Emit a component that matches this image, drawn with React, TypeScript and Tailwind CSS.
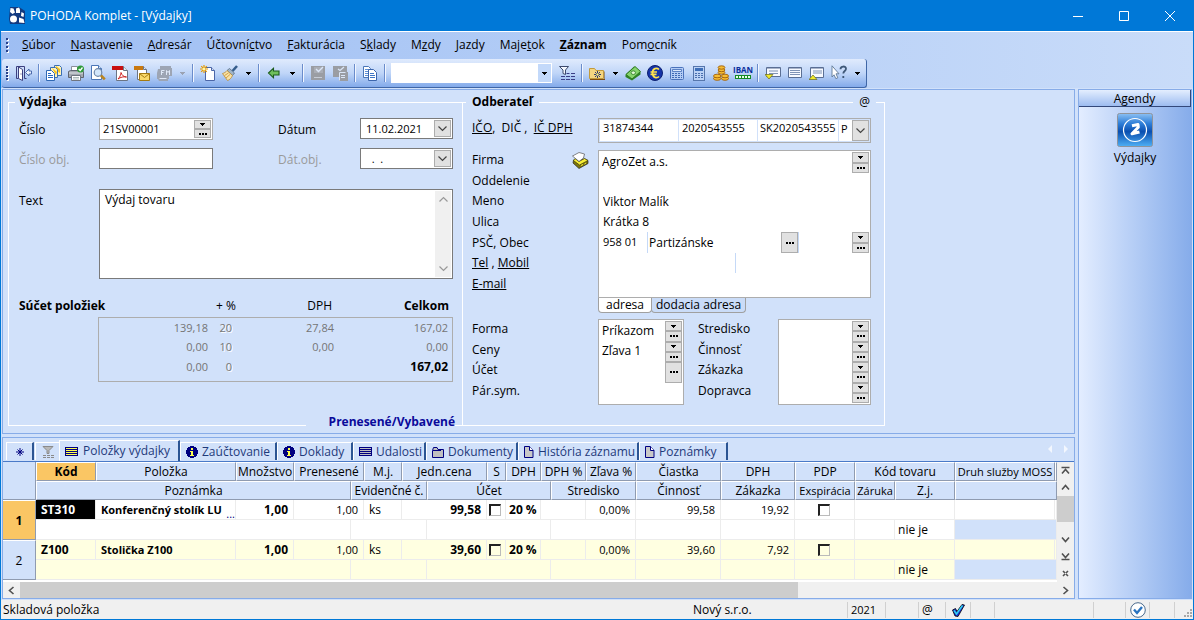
import React from "react";

type Kids = { children?: React.ReactNode };

/* ---------- small glyphs ---------- */

function Down({ className = "text-black" }: { className?: string }) {
  return (
    <svg width="5" height="3" viewBox="0 0 5 3" className={className} shapeRendering="crispEdges" aria-hidden="true">
      <path d="M0 0h5v1H4v1H3v1H2V2H1V1H0z" fill="currentColor" />
    </svg>
  );
}

function Dots() {
  return (
    <svg width="8" height="2" viewBox="0 0 8 2" shapeRendering="crispEdges" aria-hidden="true">
      <path d="M0 0h2v2H0zM3 0h2v2H3zM6 0h2v2H6z" fill="#000" />
    </svg>
  );
}

function Chevron({ d, className = "text-[#444]" }: { d: string; className?: string }) {
  return (
    <svg width="9" height="9" viewBox="0 0 9 9" className={className} fill="none" stroke="currentColor" strokeWidth="1.200" aria-hidden="true">
      <path d={d} />
    </svg>
  );
}

const CH_DOWN = "M0.5 2.5l4 4 4-4";

/* ---------- toolbar icons, 16 x 16 ---------- */

function Svg({ children }: Kids) {
  return (
    <svg width="16" height="16" viewBox="0 0 16 16" fill="none" aria-hidden="true">
      {children}
    </svg>
  );
}

const icons = {
  exit: (
    <Svg>
      <path d="M.5 13.500V1.500h8v12" stroke="#3d3f7e" />
      <path d="M.5 13.500h2M8.500 13.500h2" stroke="#3d3f7e" />
      <path d="M2.500 2l4 2.500v11l-4-2z" fill="#fff" stroke="#3d3f7e" />
      <path d="M4.500 9h1" stroke="#3d3f7e" />
      <path d="M9.500 7.500L13 4v2h2.500v3H13v2z" fill="#eaf1fd" stroke="#3f5fa5" strokeWidth=".9" />
    </Svg>
  ),
  records: (
    <Svg>
      <path d="M8.500.5h5l2 2v8h-7z" fill="#fff3b8" stroke="#3a6fb5" />
      <path d="M10 1l4 3v4l-4-3z" fill="#f7c21a" />
      <path d="M4.500 2.500h5l2 2v8h-7z" fill="#fff3b8" stroke="#3a6fb5" />
      <path d="M6 3l5 4-1 3z" fill="#f7c21a" />
      <path d="M.5 5.500h5l3 3v7h-8z" fill="#fff" stroke="#2f68b4" />
      <path d="M2 8.500h3M2 10.500h5M2 12.500h5" stroke="#2468c4" />
    </Svg>
  ),
  printer: (
    <Svg>
      <path d="M3.500 6V1.500h6V6" fill="#fff" stroke="#8a8f98" />
      <path d="M.5 6.500l2-1h11l2 1v6H.5z" fill="#a4a9b0" stroke="#5e6470" />
      <path d="M1 8h14" stroke="#dfe3e8" />
      <path d="M3.500 10.500h9v5h-9z" fill="#fff" stroke="#6f7580" />
      <path d="M5 12.500h6M5 14h6" stroke="#99aaaa" strokeWidth=".8" />
      <circle cx="12.500" cy="4" r="3.500" fill="#2f9a3a" />
      <path d="M10.700 4l1.500 1.500 2.300-3" stroke="#fff" strokeWidth="1.300" />
    </Svg>
  ),
  preview: (
    <Svg>
      <path d="M1.500.5h7l3 3v11h-10z" fill="#fff" stroke="#4b76b7" />
      <path d="M8.500.5v3h3" stroke="#4b76b7" fill="#d7e5f8" />
      <circle cx="8" cy="7.500" r="3.800" fill="#d3e6fa" stroke="#7088a8" strokeWidth="1.200" />
      <path d="M11 10.500l3.800 3.800" stroke="#b98420" strokeWidth="2.600" />
    </Svg>
  ),
  pdf: (
    <Svg>
      <path d="M4.500 1.500h7l4 4v10h-11z" fill="#fff" stroke="#6b7484" />
      <path d="M11.500 1.500v4h4" stroke="#6b7484" fill="#e5e9ef" />
      <path d="M0 1h11v4H0z" fill="#c80f0f" />
      <path d="M6 14c2-2 3-4.500 3-6.500 1 3 3 4.500 5.500 4.500-3-.7-6 .3-8.500 2z" stroke="#c80f0f" strokeWidth=".9" />
    </Svg>
  ),
  mail: (
    <Svg>
      <path d="M3.500 1.500h6l3 3v10h-9z" fill="#fff" stroke="#6b7484" />
      <path d="M9.500 1.500v3h3" stroke="#6b7484" fill="#e5e9ef" />
      <path d="M0 1h9v4H0z" fill="#c9780e" />
      <path d="M5.500 8.500h10v7h-10z" fill="#f9d96a" stroke="#a57a10" />
      <path d="M5.500 8.500l5 4 5-4" stroke="#a57a10" />
    </Svg>
  ),
  fm: (
    <Svg>
      <path d="M4 1h11v2h1v8h-3v3h-1v2H3l-1-2H1V8l1-4h2z" fill="#9da5b4" />
      <path d="M5.500 10V5.500h3M5.500 7.500h2M10.500 10V5.500l1.500 2 1.500-2V10M3.500 13.500h7" stroke="#dfe8f7" />
    </Svg>
  ),
  fresh: (
    <Svg>
      <path d="M5.500 2.500h6l3 3v10h-9z" fill="#fff" stroke="#4b66a8" />
      <path d="M11.500 2.500v3h3" fill="#cfdcf2" stroke="#4b66a8" />
      <path d="M4 0v8M0 4h8M1.200 1.200l5.600 5.600M6.800 1.200L1.200 6.800" stroke="#e79a00" strokeWidth="1.200" />
      <circle cx="4" cy="4" r="1.600" fill="#fff6a8" />
    </Svg>
  ),
  brush: (
    <Svg>
      <path d="M15 1l-4.500 5" stroke="#355d8c" strokeWidth="2.600" />
      <path d="M7.500 3.500l5 4.500-2 2.500L5 5.500z" fill="#9fb4c9" stroke="#4d6176" strokeWidth=".7" />
      <path d="M5 5.500l5.500 5c-1 2.500-3 4.500-5 5L.5 8.500C2.500 8 4 7 5 5.500z" fill="#f8e2a8" stroke="#b98a34" strokeWidth=".8" />
      <path d="M2.500 10.500l4-2.500M4 13l4-3.500" stroke="#d29a38" strokeWidth=".9" />
    </Svg>
  ),
  back: (
    <Svg>
      <path d="M2.500 8l5-4.800V6h5.500v4H7.500v2.800z" fill="#6fbf5c" stroke="#1c5c1c" strokeWidth="1.100" />
    </Svg>
  ),
  save: (
    <Svg>
      <path d="M1 1h14v14H1z" fill="#9a9da3" />
      <path d="M4 2h9v6H4z" fill="#a9adb5" />
      <path d="M6 4l2.500 2.500L13 2" stroke="#dbe6f7" strokeWidth="1.400" />
      <path d="M4 12.500h8" stroke="#c6ccd6" />
    </Svg>
  ),
  saveAll: (
    <Svg>
      <path d="M1 1h14v6h1v9H7v-4H1z" fill="#9a9da3" />
      <path d="M6 4l2 1.500L12 2" stroke="#dbe6f7" strokeWidth="1.300" />
      <path d="M7.500 15.500v-8h6M9 10.500h4M9 12.500h4" stroke="#dbe6f7" />
    </Svg>
  ),
  copy: (
    <Svg>
      <path d="M1.500 1.500h5l2 2v9h-7z" fill="#fff" stroke="#4b76b7" />
      <path d="M3 4.500h4M3 6.500h4M3 8.500h4M3 10.500h3" stroke="#5d8fd6" />
      <path d="M6.500 4.500h5l3 3v8h-8z" fill="#fff" stroke="#3c66ad" />
      <path d="M8 8.500h4M8 10.500h5M8 12.500h5" stroke="#3f76c6" />
    </Svg>
  ),
  filter: (
    <Svg>
      <path d="M.5 1.500h9L6.500 5v4.500L4 8.500V5z" fill="#f4f8ff" stroke="#3d4a6c" />
      <path d="M2 11.500h4M7 11.500h4M12 11.500h4M2 14.500h4M7 14.500h4M12 14.500h4M7.500 8.500h3M12 8.500h4" stroke="#3a3f86" />
    </Svg>
  ),
  folder: (
    <Svg>
      <path d="M.5 13.500v-10h5l1.500 2h7.500v8z" fill="#f5d680" stroke="#c29a3c" />
      <path d="M1 14.500h15V6.500" stroke="#7d4c10" />
      <path d="M8.500 6v7M5 9.500h7M6 7l5 5M11 7l-5 5" stroke="#1c2b6b" strokeWidth=".9" />
      <circle cx="8.500" cy="9.500" r="1.200" fill="#fff07a" />
    </Svg>
  ),
  money: (
    <Svg>
      <path d="M.5 9.500L9 1.500l6.500 5.500v2.500L7 15.500.5 12z" fill="#2f8424" />
      <path d="M1 9.500L10 1.500l5.500 5L7 14z" fill="#86d46c" stroke="#2f7a24" />
      <ellipse cx="8.300" cy="7.700" rx="2.200" ry="1.800" fill="#e0f8d3" stroke="#2f7a24" strokeWidth=".8" />
    </Svg>
  ),
  euro: (
    <Svg>
      <circle cx="8" cy="8" r="7.500" fill="#1533a8" stroke="#0b1f70" />
      <path d="M12 4.500C10 2.500 5.500 3 5.500 8s4.500 5.500 6.500 3.500M3.500 7h6.500M3.500 9.300h6" stroke="#ffe34d" strokeWidth="1.700" />
    </Svg>
  ),
  calc: (
    <Svg>
      <rect x="1.500" y="2.500" width="13" height="12" rx="1" fill="#b5cdf5" stroke="#4a72bb" />
      <path d="M3.500 4.500h9v2h-9z" fill="#dbe8fc" stroke="#3f6ab5" strokeWidth=".8" />
      <path d="M3 8.500h10M3 10.500h10M3 12.500h10" stroke="#3f6ab5" strokeDasharray="2 1" />
    </Svg>
  ),
  calc2: (
    <Svg>
      <rect x="2.500" y="1.500" width="11" height="14" fill="#bcd2f5" stroke="#5676ac" />
      <path d="M4 3h8v3H4z" fill="#3f6fb8" />
      <path d="M4 8.500h8M4 10.500h8M4 12.500h8" stroke="#4a6fae" strokeDasharray="2 1" />
    </Svg>
  ),
  coins: (
    <Svg>
      <g fill="#f6bd35" stroke="#a05f08" strokeWidth=".9">
        <ellipse cx="8.500" cy="7.500" rx="3.400" ry="1.700" />
        <ellipse cx="8.500" cy="5" rx="3.400" ry="1.700" />
        <ellipse cx="8.500" cy="2.500" rx="3.400" ry="1.700" />
        <ellipse cx="4.200" cy="13.500" rx="3.700" ry="1.800" />
        <ellipse cx="4.200" cy="11" rx="3.700" ry="1.800" />
        <ellipse cx="12" cy="13.500" rx="3.500" ry="1.800" />
        <ellipse cx="12" cy="11" rx="3.500" ry="1.800" />
      </g>
    </Svg>
  ),
  iban: (
    <svg width="16" height="16" viewBox="0 0 16 16" aria-hidden="true" className="overflow-visible">
      <text x="8" y="8" textAnchor="middle" fontSize="8" fontWeight="700" fill="#0a2f9c" fontFamily="Open Sans, sans-serif">
        IBAN
      </text>
      <path d="M0 10h16v4H0z" fill="#158a25" />
      <path d="M1 12h14" stroke="#eaffea" strokeWidth="2" strokeDasharray="2 1" />
    </svg>
  ),
  panelDown: (
    <Svg>
      <path d="M1.500 2.500h14v9h-14z" fill="#f6f9ff" stroke="#5a6f94" />
      <path d="M2 3h13" stroke="#5a6f94" />
      <path d="M4 6h9M4 8.500h9" stroke="#7f93b5" />
      <path d="M0 9.500h8l-4 4.500z" fill="#f1ea2a" stroke="#66681a" strokeWidth=".7" />
    </Svg>
  ),
  panel: (
    <Svg>
      <path d="M1.500 2.500h13v10h-13z" fill="#f6f9ff" stroke="#5a6f94" />
      <path d="M2 3h12" stroke="#5a6f94" />
      <path d="M3 5.500h10M3 7.500h10M3 9.500h10" stroke="#7f93b5" />
    </Svg>
  ),
  panelUp: (
    <Svg>
      <path d="M1.500 2.500h13v10h-13z" fill="#f6f9ff" stroke="#5a6f94" />
      <path d="M2 3h12" stroke="#5a6f94" />
      <path d="M4 6h9M4 8h9" stroke="#7f93b5" />
      <path d="M0 14.500h8L4 10z" fill="#f1ea2a" stroke="#66681a" strokeWidth=".7" />
    </Svg>
  ),
  help: (
    <Svg>
      <path d="M1 .8l7 8H5l1.800 4-2 .8L3 9.800 1 12z" fill="#fff" stroke="#5f7896" strokeWidth=".9" />
      <path d="M9.500 4.200c0-3.500 5.500-3.500 5.500-.4 0 2.200-2.700 2.200-2.700 4.700M12.300 11v2" stroke="#3f5878" strokeWidth="1.800" />
    </Svg>
  ),
};

function Tool({ icon, label }: { icon: keyof typeof icons; label: string }) {
  return (
    <button type="button" aria-label={label} className="grid w-[22px] shrink-0 place-items-center">
      {icons[icon]}
    </button>
  );
}

function ToolDrop({ label, dim = false }: { label: string; dim?: boolean }) {
  return (
    <button type="button" aria-label={label} className="grid w-3.5 shrink-0 place-items-center">
      <Down className={dim ? "text-[#9ba3b3]" : "text-black"} />
    </button>
  );
}

function ToolSep() {
  return (
    <div className="flex w-2 shrink-0 justify-center py-[5px]">
      <div className="w-0.5 border-r border-l border-r-[#f1f6ff] border-l-[#6a8ccb]" />
    </div>
  );
}

function Grip({ rows }: { rows: 4 | 5 }) {
  const ys = rows === 4 ? [0, 4, 8, 12] : [0, 3, 6, 9, 12];
  return (
    <svg width="3" height="15" viewBox="0 0 3 15" shapeRendering="crispEdges" aria-hidden="true">
      {ys.map((y) => (
        <g key={y}>
          <rect x="1" y={y + 1} width="2" height="2" fill="#fff" />
          <rect x="0" y={y} width="2" height="2" fill="#27418a" />
        </g>
      ))}
    </svg>
  );
}

/* ---------- form controls ---------- */

const face = "grid w-full flex-1 place-items-center border border-[#adadad] bg-[#e1e1e1]";

function Spin({ label }: { label: string }) {
  return (
    <div className="flex w-[17px] shrink-0 flex-col self-stretch">
      <button type="button" aria-label={label + " – zoznam"} className={face}>
        <Down />
      </button>
      <button type="button" aria-label={label + " – výber"} className={face}>
        <Dots />
      </button>
    </div>
  );
}

function More({ label }: { label: string }) {
  return (
    <div className="flex w-[17px] shrink-0 self-stretch">
      <button type="button" aria-label={label + " – výber"} className={face}>
        <Dots />
      </button>
    </div>
  );
}

function DateBox({ id, value, label }: { id: string; value: string; label: string }) {
  return (
    <div className="flex h-[21px] border border-[#7a7a7a] bg-white p-px">
      <input id={id} defaultValue={value} className="w-full min-w-0 flex-1 bg-transparent pl-1 text-[11px] outline-none" />
      <button type="button" aria-label={label + " – kalendár"} className="grid w-[17px] shrink-0 place-items-center border border-[#adadad] bg-[#e1e1e1]">
        <Chevron d={CH_DOWN} />
      </button>
    </div>
  );
}

const field = "min-w-0 bg-transparent outline-none";
const group = "border border-[#adadad] bg-white";
const taxField = "mr-px min-w-0 bg-white pb-1.5 text-[11px] outline-none";

function DeliveryForm() {
  return (
    <fieldset className="w-[455px] shrink-0 border border-white pr-[9px] pb-[43px] pl-2.5">
      <legend className="-ml-1 px-1 leading-[18px] font-bold">Výdajka</legend>
      <div className="grid grid-cols-[80px_114px_1fr_93px] pt-[7px]">
        <label htmlFor="cislo" className="leading-6">Číslo</label>
        <div className="flex h-[22px] border border-[#adadad] bg-white p-px">
          <input id="cislo" defaultValue="21SV00001" className={field + " flex-1 pl-0.5 text-[11px]"} />
          <Spin label="Číslo" />
        </div>
        <label htmlFor="datum" className="pl-[65px] leading-6">Dátum</label>
        <DateBox id="datum" value="11.02.2021" label="Dátum" />
      </div>
      <div className="grid grid-cols-[80px_114px_1fr_93px] pt-1.5">
        <label htmlFor="cisloobj" className="leading-6 text-[#9a9a9a]">Číslo obj.</label>
        <input id="cisloobj" defaultValue="" className="h-[21px] border border-[#7a7a7a] bg-white px-1 outline-none" />
        <label htmlFor="datobj" className="pl-[65px] leading-6 text-[#9a9a9a]">Dát.obj.</label>
        <DateBox id="datobj" value="  .  ." label="Dát.obj." />
      </div>
      <div className="grid grid-cols-[80px_1fr] pt-[17px]">
        <label htmlFor="text" className="leading-6">Text</label>
        <div className="flex h-[90px] border border-[#7a7a7a] bg-white p-px">
          <textarea id="text" defaultValue="Výdaj tovaru" className="min-w-0 flex-1 resize-none overflow-hidden px-1 leading-[18px] outline-none" />
          <div className="flex w-4 flex-col items-center justify-between bg-[#f0f0f0] py-1">
            <Chevron d="M0.5 6.500l4-4 4 4" className="text-[#999]" />
            <Chevron d={CH_DOWN} className="text-[#999]" />
          </div>
        </div>
      </div>
      <div className="pt-[17px]">
        <table className="w-full table-fixed border-separate border-spacing-0">
          <colgroup>
            <col className="w-[79px]" />
            <col className="w-[110px]" />
            <col className="w-7" />
            <col className="w-[102px]" />
            <col />
          </colgroup>
          <thead>
            <tr className="h-[21px] leading-5">
              <th colSpan={2} className="pb-px text-left font-bold">Súčet položiek</th>
              <th className="pb-px text-right font-normal whitespace-nowrap">+ %</th>
              <th className="pr-1.5 pb-px text-right font-normal">DPH</th>
              <th className="pr-1 pb-px text-right font-bold">Celkom</th>
            </tr>
          </thead>
          <tbody className="text-[11px] text-[#757575]">
            <tr className="h-5">
              <td />
              <td className="border-t border-l border-[#adadad] text-right">139,18</td>
              <td className="border-t border-[#adadad] pr-1 text-right [text-shadow:1px_1px_0_#fff]">20</td>
              <td className="border-t border-[#adadad] pr-1 text-right">27,84</td>
              <td className="border-t border-r border-[#adadad] pr-1 text-right">167,02</td>
            </tr>
            <tr className="h-5">
              <td />
              <td className="border-l border-[#adadad] text-right">0,00</td>
              <td className="pr-1 text-right [text-shadow:1px_1px_0_#fff]">10</td>
              <td className="pr-1 text-right">0,00</td>
              <td className="border-r border-[#adadad] pr-1 text-right">0,00</td>
            </tr>
            <tr className="h-[25px]">
              <td />
              <td className="border-b border-l border-[#adadad] pb-1 text-right">0,00</td>
              <td className="border-b border-[#adadad] pr-1 pb-1 text-right [text-shadow:1px_1px_0_#fff]">0</td>
              <td className="border-b border-[#adadad]" />
              <td className="border-r border-b border-[#adadad] pr-1 pb-1 text-right text-[12px] font-bold text-black">167,02</td>
            </tr>
          </tbody>
        </table>
      </div>
    </fieldset>
  );
}

function Printer() {
  return (
    <svg width="17" height="17" viewBox="0 0 17 17" aria-hidden="true">
      <path d="M1.500 8l-.5 3 6 5.500 9-5V8.500L13 7z" fill="#7d760c" stroke="#222" strokeWidth=".7" />
      <path d="M1.500 8.500L7.500 13l8.500-4.500-3.500-2L7 9.500 3 6.500z" fill="#f7ee35" stroke="#3c3a08" strokeWidth=".7" />
      <path d="M.5 4L7 .5l5.500 1.500-1 4L7 9.500z" fill="#fff" stroke="#555" strokeWidth=".7" />
      <path d="M9 13.500l2-1M12.500 12l1.500-1" stroke="#f7ee35" />
    </svg>
  );
}

function CustomerForm() {
  return (
    <fieldset className="relative -ml-px w-[423px] shrink-0 border border-white pr-[13px] pb-5 pl-[9px]">
      <legend className="-ml-1.5 px-1.5 leading-[18px] font-bold">Odberateľ</legend>
      <button type="button" className="absolute -top-[18px] right-2 bg-[#d1e1fa] px-1.5 leading-[18px]">@</button>
      <div className="grid grid-cols-[1fr_273px] pt-[7px]">
        <div className="leading-5">
          <a href="#ico" className="underline">IČO</a>,&nbsp; DIČ ,&nbsp; <a href="#icdph" className="underline">IČ DPH</a>
        </div>
        <div className="flex h-[25px] border border-[#adadad] bg-[#d1e1fa] p-px">
          <input aria-label="IČO" defaultValue="31874344" className={taxField + " w-[78px] pl-[3px]"} />
          <input aria-label="DIČ" defaultValue="2020543555" className={taxField + " w-[78px] pl-[3px]"} />
          <input aria-label="IČ DPH" defaultValue="SK2020543555" className={taxField + " w-[80px] pl-0.5"} />
          <div className="grid flex-1 grid-cols-[1fr_17px] bg-white">
            <select aria-label="Typ platcu" className="col-span-2 col-start-1 row-start-1 appearance-none bg-transparent pb-1 pl-0.5 text-[11px] outline-none">
              <option>P</option>
            </select>
            <span className="pointer-events-none col-start-2 row-start-1 grid place-items-center border border-[#adadad] bg-[#e1e1e1]">
              <Chevron d={CH_DOWN} />
            </span>
          </div>
        </div>
      </div>
      <div className="grid grid-cols-[1fr_273px] pt-[7px]">
        <div className="flex h-36 flex-col justify-between leading-5">
          <div className="flex justify-between">
            <label htmlFor="firma">Firma</label>
            <button type="button" aria-label="Adresár" className="mr-[9px]">
              <Printer />
            </button>
          </div>
          <label htmlFor="oddelenie">Oddelenie</label>
          <label htmlFor="meno">Meno</label>
          <label htmlFor="ulica">Ulica</label>
          <label htmlFor="psc">PSČ, Obec</label>
          <div>
            <a href="#tel" className="underline">Tel</a> , <a href="#mobil" className="underline">Mobil</a>
          </div>
          <a href="#email" className="underline">E-mail</a>
        </div>
        <div className={group + " flex h-[148px] flex-col justify-between p-px pb-1"}>
          <div className="flex h-[21px] shrink-0">
            <input id="firma" defaultValue="AgroZet a.s." className={field + " flex-1 pb-0.5 pl-0.5"} />
            <Spin label="Firma" />
          </div>
          <input id="oddelenie" className={field + " h-5 pl-[3px]"} />
          <input id="meno" defaultValue="Viktor Malík" className={field + " h-5 pb-0.5 pl-[3px]"} />
          <input id="ulica" defaultValue="Krátka 8" className={field + " h-5 pb-0.5 pl-[3px]"} />
          <div className="flex h-[21px] shrink-0">
            <input id="psc" defaultValue="958 01" className={field + " w-[47px] pb-0.5 pl-[3px] text-[11px]"} />
            <input aria-label="Obec" defaultValue="Partizánske" className={field + " w-[134px] border-l border-[#c5d9f7] pl-px"} />
            <More label="Obec" />
            <input aria-label="Štát" className={field + " flex-1 border-l border-[#c5d9f7]"} />
            <Spin label="Štát" />
          </div>
          <div className="flex h-5">
            <input aria-label="Tel" className={field + " w-[135px]"} />
            <input aria-label="Mobil" className={field + " flex-1 border-l border-[#c5d9f7]"} />
          </div>
          <input aria-label="E-mail" className={field + " h-5"} />
        </div>
      </div>
      <div className="flex h-[15px] pl-[126px] leading-[14px]">
        <button type="button" className="w-[54px] rounded-b border border-t-0 border-[#a0a0a0] bg-white">adresa</button>
        <button type="button" className="-ml-px rounded-b border border-t-0 border-[#a0a0a0] bg-[#cadcf8] px-1">dodacia adresa</button>
      </div>
      <div className="grid grid-cols-[126px_86px_1fr_93px] pt-1.5">
        <div className="flex h-[82px] flex-col justify-between leading-5">
          <label htmlFor="forma">Forma</label>
          <label htmlFor="ceny">Ceny</label>
          <label htmlFor="ucet">Účet</label>
          <label htmlFor="parsym">Pár.sym.</label>
        </div>
        <div className={group + " grid h-[86px] grid-cols-1 grid-rows-4 p-px"}>
          <div className="flex min-h-0">
            <input id="forma" defaultValue="Príkazom" className={field + " flex-1 pl-0.5"} />
            <Spin label="Forma" />
          </div>
          <div className="flex min-h-0">
            <input id="ceny" defaultValue="Zľava 1" className={field + " flex-1 pb-0.5 pl-0.5"} />
            <Spin label="Ceny" />
          </div>
          <div className="flex min-h-0">
            <input id="ucet" className={field + " flex-1"} />
            <More label="Účet" />
          </div>
          <input id="parsym" className={field + " w-full"} />
        </div>
        <div className="flex h-[82px] flex-col justify-between pl-3.5 leading-5">
          <label htmlFor="stredisko">Stredisko</label>
          <label htmlFor="cinnost">Činnosť</label>
          <label htmlFor="zakazka">Zákazka</label>
          <label htmlFor="dopravca">Dopravca</label>
        </div>
        <div className={group + " grid h-[86px] grid-cols-1 grid-rows-4 p-px"}>
          {[
            ["stredisko", "Stredisko"],
            ["cinnost", "Činnosť"],
            ["zakazka", "Zákazka"],
            ["dopravca", "Dopravca"],
          ].map(([id, label]) => (
            <div key={id} className="flex min-h-0">
              <input id={id} className={field + " flex-1"} />
              <Spin label={label} />
            </div>
          ))}
        </div>
      </div>
    </fieldset>
  );
}

/* ---------- item tabs ---------- */

const InfoIcon = (
  <svg width="12" height="12" viewBox="0 0 12 12" aria-hidden="true" shapeRendering="crispEdges">
    <path d="M4 0h4v1h2v1h1v2h1v4h-1v2h-1v1H8v1H4v-1H2v-1H1V8H0V4h1V2h1V1h2z" fill="#000080" />
    <path d="M5 2h2v2H5zM4 5h3v4h1v1H4V9h1V6H4z" fill="#ffff50" />
  </svg>
);
const listIcon = (fill: string) => (
  <svg width="13" height="9" viewBox="0 0 13 9" aria-hidden="true" shapeRendering="crispEdges">
    <path d="M0 0h13v9H0z" fill="#000080" />
    <path d="M1 1h11v1H1zM1 3h11v1H1zM1 5h11v1H1zM1 7h11v1H1z" fill={fill} />
  </svg>
);
const FolderIcon = (
  <svg width="12" height="12" viewBox="0 0 12 12" aria-hidden="true">
    <path d="M.5 11.500v-7l1-3h3.500l1 2h5.500v8z" fill="#c0c0c0" stroke="#000080" />
    <path d="M1 4.500h8" stroke="#000080" />
  </svg>
);
const PageIcon = (
  <svg width="10" height="12" viewBox="0 0 10 12" aria-hidden="true">
    <path d="M.5.5h5l3.500 4v7H.5z" fill="#c8c8c8" stroke="#000080" />
    <path d="M5.500.5v4h3.500" fill="#fff" stroke="#000080" />
  </svg>
);

const tabs: { label: string; icon: React.ReactNode; w: string }[] = [
  { label: "Zaúčtovanie", icon: InfoIcon, w: "w-[97px]" },
  { label: "Doklady", icon: InfoIcon, w: "w-[76px]" },
  { label: "Udalosti", icon: listIcon("#c0c0c0"), w: "w-[73px]" },
  { label: "Dokumenty", icon: FolderIcon, w: "w-[92px]" },
  { label: "História záznamu", icon: PageIcon, w: "w-[121px]" },
  { label: "Poznámky", icon: PageIcon, w: "w-[89px]" },
];

const tabEdge = "border-t border-r-2 border-l border-t-white border-r-[#2c5593] border-l-white";

function TabBar() {
  return (
    <div role="tablist" className="flex h-6 items-end border-b border-[#4a7ac8] pl-[3px] whitespace-nowrap text-[#1f3a7a]">
      <button type="button" aria-label="Nový" className={tabEdge + " mb-px grid h-[18px] w-7 place-items-center"}>
        <svg width="8" height="8" viewBox="0 0 8 8" aria-hidden="true">
          <path d="M4 0v8M0 4h8M1.500 1.500l5 5M6.500 1.500l-5 5" stroke="#000080" />
        </svg>
      </button>
      <button type="button" aria-label="Filter" className="mb-px ml-px grid h-[18px] w-6 place-items-center border-t border-l border-white">
        <svg width="12" height="12" viewBox="0 0 12 12" fill="none" aria-hidden="true">
          <path d="M1 .5h10l-4 4v3H5v-3z" fill="#b8b8b8" stroke="#8a8a8a" />
          <path d="M1 9.500h3M5 9.500h3M9 9.500h3M1 11.500h3M5 11.500h3M9 11.500h3" stroke="#8a8a8a" />
        </svg>
      </button>
      <button type="button" role="tab" aria-selected="true" className={tabEdge + " flex h-[21px] w-[121px] items-center gap-[5px] pl-[5px]"}>
        {listIcon("#ffff50")}
        Položky výdajky
      </button>
      {tabs.map((t) => (
        <button key={t.label} type="button" role="tab" aria-selected="false" className={tabEdge + " mb-px flex h-[18px] items-center gap-1 pl-[5px] " + t.w}>
          {t.icon}
          {t.label}
        </button>
      ))}
      <div className="mr-1.5 mb-2 ml-auto flex gap-3">
        <svg width="4" height="8" viewBox="0 0 4 8" aria-hidden="true">
          <path d="M4 0v8L0 4z" fill="#f3f7fe" />
        </svg>
        <svg width="4" height="8" viewBox="0 0 4 8" aria-hidden="true">
          <path d="M0 0v8l4-4z" fill="#f3f7fe" />
        </svg>
      </div>
    </div>
  );
}

/* ---------- item grid ---------- */

function Th({ span = 1, children, active = false, small = false }: Kids & { span?: number; active?: boolean; small?: boolean }) {
  return (
    <th
      colSpan={span}
      className={
        "border-t border-r border-b border-l border-t-white border-r-[#8f9bb0] border-b-[#8f9bb0] border-l-white p-0 text-center whitespace-nowrap " +
        (active ? "bg-[#fac664] font-bold " : "bg-[#d1e1fa] font-normal ") +
        (small ? "text-[11px]" : "")
      }
    >
      {children}
    </th>
  );
}

function Td({ span = 1, children, className = "" }: Kids & { span?: number; className?: string }) {
  return (
    <td colSpan={span} className={"border-r border-b border-[#ececec] py-0 whitespace-nowrap " + className}>
      {children}
    </td>
  );
}

function Check({ label }: { label: string }) {
  return (
    <input
      type="checkbox"
      aria-label={label}
      className="mx-auto block size-3 appearance-none border-t-2 border-r border-b border-l-2 border-t-[#222] border-r-[#bbb] border-b-[#bbb] border-l-[#222]"
    />
  );
}

type Item = {
  n: number;
  kod: string;
  polozka: string;
  cena: string;
  ciastka: string;
  dph: string;
  current: boolean;
};

const items: Item[] = [
  { n: 1, kod: "ST310", polozka: "Konferenčný stolík LU", cena: "99,58", ciastka: "99,58", dph: "19,92", current: true },
  { n: 2, kod: "Z100", polozka: "Stolička Z100", cena: "39,60", ciastka: "39,60", dph: "7,92", current: false },
];

const num = "pr-[5px] text-right text-[11px]";

function ItemRows({ it }: { it: Item }) {
  const bg = it.current ? "bg-white" : "bg-[#ffffe1]";
  return (
    <>
      <tr className={"h-5 " + bg}>
        <th
          rowSpan={2}
          className={
            "border-t border-r border-b border-t-white border-r-[#8f9bb0] border-b-[#8f9bb0] p-0 text-center " +
            (it.current ? "bg-[#fac664] font-bold" : "bg-[#d1e1fa] font-normal")
          }
        >
          {it.n}
        </th>
        <Td className={"pl-[5px] font-bold " + (it.current ? "bg-black text-white" : "")}>{it.kod}</Td>
        <Td className="px-0 text-[11px] font-bold">
          <div className="flex justify-between pl-[5px]">
            {it.polozka}
            {it.current && <span className="translate-y-1 font-normal text-[#000080]">...</span>}
          </div>
        </Td>
        <Td className="pr-[5px] text-right font-bold">1,00</Td>
        <Td span={2} className={num}>1,00</Td>
        <Td className="pl-[5px]">ks</Td>
        <Td span={2} className="pr-[5px] text-right font-bold">{it.cena}</Td>
        <Td className="pr-0.5 pl-0"><Check label={"S " + it.n} /></Td>
        <Td className="pl-[3px] font-bold">20 %</Td>
        <Td span={2} />
        <Td className={num}>0,00%</Td>
        <Td className={num}>{it.ciastka}</Td>
        <Td className={num}>{it.dph}</Td>
        <Td className="pr-0.5 pl-0"><Check label={"PDP " + it.n} /></Td>
        <Td span={2} />
        <Td />
        <Td className="px-0" />
      </tr>
      <tr className={"h-5 " + bg}>
        <Td span={4} />
        <Td span={3} />
        <Td span={4} />
        <Td span={2} />
        <Td />
        <Td />
        <Td />
        <Td />
        <Td className="pl-[3px]">nie je</Td>
        <Td span={2} className="bg-[#d1e1fa]" />
      </tr>
    </>
  );
}

const cols = [
  "w-[33px]", "w-[60px]", "w-[140px]", "w-[58px]", "w-[57px]", "w-[13px]", "w-[38px]",
  "w-[25px]", "w-[60px]", "w-[19px]", "w-[35px]", "w-[10px]", "w-[35px]", "w-[50px]",
  "w-[85px]", "w-[74px]", "w-[60px]", "w-[40px]", "w-[60px]", "w-[100px]", "",
];

function ScrollBtn({ d, label }: { d: string; label: string }) {
  return (
    <button type="button" aria-label={label} className="grid size-[17px] shrink-0 place-items-center">
      <svg width="9" height="9" viewBox="0 0 9 9" fill="none" stroke="#505050" strokeWidth="1.600" aria-hidden="true">
        <path d={d} />
      </svg>
    </button>
  );
}

function ItemGrid() {
  return (
    <div className="flex flex-1 flex-col bg-white">
      <div className="flex flex-1">
        <div className="min-w-0 flex-1 overflow-hidden">
          <table className="w-full table-fixed border-separate border-spacing-0 leading-[17px]">
            <colgroup>
              {cols.map((c, i) => (
                <col key={i} className={c} />
              ))}
            </colgroup>
            <thead>
              <tr className="h-[19px]">
                <th rowSpan={2} className="border-r border-b border-[#8f9bb0] bg-[#d1e1fa] p-0" />
                <Th active>Kód</Th>
                <Th>Položka</Th>
                <Th>Množstvo</Th>
                <Th span={2}>Prenesené</Th>
                <Th>M.j.</Th>
                <Th span={2}>Jedn.cena</Th>
                <Th>S</Th>
                <Th>DPH</Th>
                <Th span={2}>DPH %</Th>
                <Th>Zľava %</Th>
                <Th>Čiastka</Th>
                <Th>DPH</Th>
                <Th>PDP</Th>
                <Th span={2}>Kód tovaru</Th>
                <Th small>Druh služby MOSS</Th>
                <Th />
              </tr>
              <tr className="h-[19px]">
                <Th span={4}>Poznámka</Th>
                <Th span={3}>Evidenčné č.</Th>
                <Th span={4}>Účet</Th>
                <Th span={2}>Stredisko</Th>
                <Th>Činnosť</Th>
                <Th>Zákazka</Th>
                <Th small>Exspirácia</Th>
                <Th small>Záruka</Th>
                <Th>Z.j.</Th>
                <Th span={2} />
              </tr>
            </thead>
            <tbody>
              {items.map((it) => (
                <ItemRows key={it.n} it={it} />
              ))}
            </tbody>
          </table>
        </div>
        <div className="flex min-h-[120px] w-[17px] shrink-0 flex-col bg-[#f0f0f0]">
          <ScrollBtn label="Prvý" d="M0.500 1.500h8M1 7.500l3.500-4 3.500 4" />
          <ScrollBtn label="Hore" d="M1 6.500l3.500-4 3.500 4" />
          <div className="h-[26px] bg-[#cdcdcd]" />
          <div className="flex-1" />
          <ScrollBtn label="Dole" d="M1 2.500l3.500 4 3.500-4" />
          <ScrollBtn label="Posledný" d="M0.500 7.500h8M1 1.500l3.500 4 3.500-4" />
          <ScrollBtn label="Nový záznam" d="M2 2l2 2M5 5l2 2M7 2l-2 2M4 5l-2 2" />
        </div>
      </div>
      <div className="flex h-4 items-center bg-[#f0f0f0]">
        <ScrollBtn label="Vľavo" d="M6.500 1l-4 3.500 4 3.500" />
        <div className="flex h-4 flex-1">
          <div className="w-3/4 bg-[#cdcdcd]" />
        </div>
        <ScrollBtn label="Vpravo" d="M2.500 1l4 3.500-4 3.500" />
      </div>
    </div>
  );
}

/* ---------- window chrome ---------- */

function TitleBar() {
  return (
    <header className="flex h-8 items-stretch border-b border-white bg-[#0078d7] text-white">
      <div className="flex flex-1 items-center gap-1 pl-2">
        <svg width="17" height="17" viewBox="0 0 17 17" aria-hidden="true">
          <path d="M1 0h9l6 4v13H1L0 12z" fill="#123a80" />
          <g fill="#fff">
            <path d="M1.500 1l3 .5 1.500 4-2.500 1.500L1 5z" />
            <path d="M7 1.500l3-1 1 2v3.500H7z" />
            <path d="M12.500 5l2.500 1.500-.5 3.500-2.500-1z" />
            <circle cx="4.500" cy="12" r="3.500" />
            <path d="M10 10.500l4.500 1.500 1 4-5.500-.5z" />
          </g>
        </svg>
        <h1>POHODA Komplet - [Výdajky]</h1>
      </div>
      <button type="button" aria-label="Minimalizovať" className="grid w-[46px] place-items-center">
        <svg width="10" height="10" viewBox="0 0 10 10" stroke="#fff" aria-hidden="true"><path d="M0 5.500h10" /></svg>
      </button>
      <button type="button" aria-label="Maximalizovať" className="grid w-[46px] place-items-center">
        <svg width="10" height="10" viewBox="0 0 10 10" stroke="#fff" fill="none" aria-hidden="true"><path d="M.5.5h9v9h-9z" /></svg>
      </button>
      <button type="button" aria-label="Zavrieť" className="grid w-[46px] place-items-center">
        <svg width="10" height="10" viewBox="0 0 10 10" stroke="#fff" fill="none" aria-hidden="true"><path d="M0 0l10 10M10 0L0 10" /></svg>
      </button>
    </header>
  );
}

const menu: [string, string, string][] = [
  ["", "S", "úbor"],
  ["", "N", "astavenie"],
  ["", "A", "dresár"],
  ["Účtovní", "c", "tvo"],
  ["", "F", "akturácia"],
  ["S", "k", "lady"],
  ["M", "z", "dy"],
  ["", "J", "azdy"],
  ["Maje", "t", "ok"],
  ["", "Z", "áznam"],
  ["Pom", "o", "cník"],
];

function MenuBar() {
  return (
    <nav className="flex h-[26px] items-center pl-[5px]">
      <Grip rows={4} />
      <div className="flex gap-[15px] pl-[13px]">
        {menu.map(([a, b, c]) => (
          <button key={a + b + c} type="button" className={"whitespace-nowrap " + (b === "Z" ? "font-bold" : "")}>
            {a}
            <span className="underline">{b}</span>
            {c}
          </button>
        ))}
      </div>
    </nav>
  );
}

function ToolBar() {
  return (
    <div className="flex pt-px">
      <div
        role="toolbar"
        className="ml-px flex h-[29px] rounded-[3px] border-r border-b border-[#3f66a6] bg-linear-to-b from-[#e0ebfd] via-[#c0d6f8] to-[#83aaea] pr-0.5 pl-1"
      >
        <div className="flex w-[7px] items-center">
          <Grip rows={5} />
        </div>
        <Tool icon="exit" label="Koniec" />
        <ToolSep />
        <Tool icon="records" label="Agendy" />
        <Tool icon="printer" label="Tlač" />
        <Tool icon="preview" label="Náhľad" />
        <Tool icon="pdf" label="PDF" />
        <Tool icon="mail" label="Poslať e-mailom" />
        <Tool icon="fm" label="Fiškálny modul" />
        <ToolDrop label="Fiškálny modul – možnosti" dim />
        <ToolSep />
        <Tool icon="fresh" label="Nový záznam" />
        <Tool icon="brush" label="Upraviť" />
        <ToolDrop label="Upraviť – možnosti" />
        <ToolSep />
        <Tool icon="back" label="Späť" />
        <ToolDrop label="Späť – história" />
        <ToolSep />
        <Tool icon="save" label="Uložiť" />
        <Tool icon="saveAll" label="Uložiť všetko" />
        <ToolSep />
        <Tool icon="copy" label="Kópia" />
        <ToolSep />
        <div className="my-1 mr-1 ml-0.5 grid w-[161px] grid-cols-[1fr_13px] border border-white bg-white">
          <select aria-label="Hľadať" className="col-span-2 col-start-1 row-start-1 appearance-none bg-transparent outline-none">
            <option></option>
          </select>
          <span className="pointer-events-none col-start-2 row-start-1 grid place-items-center bg-[#c3d9fa]">
            <Down />
          </span>
        </div>
        <Tool icon="filter" label="Výber" />
        <ToolSep />
        <Tool icon="folder" label="Obľúbené" />
        <ToolDrop label="Obľúbené – možnosti" />
        <Tool icon="money" label="Pokladňa" />
        <Tool icon="euro" label="Kurzový lístok" />
        <Tool icon="calc" label="Kalkulačka" />
        <Tool icon="calc2" label="Daňová kalkulačka" />
        <Tool icon="coins" label="Mince" />
        <Tool icon="iban" label="IBAN" />
        <ToolSep />
        <Tool icon="panelDown" label="Panel dole" />
        <Tool icon="panel" label="Panel" />
        <Tool icon="panelUp" label="Panel hore" />
        <Tool icon="help" label="Pomoc" />
        <ToolDrop label="Pomoc – možnosti" />
      </div>
    </div>
  );
}

function Sidebar() {
  return (
    <aside className="flex w-[114px] shrink-0 flex-col border border-[#87ace8] bg-linear-to-r from-[#e3edff] to-[#86acea]">
      <h2 className="h-[17px] border-r border-b border-[#33487a] bg-linear-to-b from-[#e4eefe] to-[#9dbcf0] text-center leading-[17px]">Agendy</h2>
      <button type="button" className="mt-1.5 flex flex-col items-center">
        <svg width="36" height="34" viewBox="0 0 36 34" aria-hidden="true">
          <defs>
            <linearGradient id="tile" x1="0" y1="0" x2="0" y2="1">
              <stop offset="0" stopColor="#8cc0f3" />
              <stop offset=".3" stopColor="#2f7fd8" />
              <stop offset=".55" stopColor="#0a4fb0" />
              <stop offset="1" stopColor="#4fb0f5" />
            </linearGradient>
          </defs>
          <rect x=".5" y=".5" width="35" height="33" rx="2" fill="url(#tile)" stroke="#8f949c" />
          <circle cx="18" cy="17" r="11.500" fill="none" stroke="#fff" strokeWidth="1.200" />
          <path d="M15 12.800l6-1.300.3 2.700-6.300 6.600 7.500-1.800" fill="none" stroke="#fff" strokeWidth="3" strokeLinejoin="round" />
        </svg>
        <span className="mt-0.5 leading-[18px]">Výdajky</span>
      </button>
    </aside>
  );
}

function StatusBar() {
  const cell = "flex h-4 shrink-0 items-center border-l border-[#d0d0d0]";
  return (
    <footer className="flex h-5 items-center border-b border-[#0078d7] bg-[#f0f0f0] pt-px">
      <div className="flex-1 pl-0.5">Skladová položka</div>
      <div className="w-[154px]">Nový s.r.o.</div>
      <div className={cell + " w-[38px] pl-[3px] text-[11px]"}>2021</div>
      <div className={cell + " w-[33px]"} />
      <div className={cell + " w-[27px] pl-[3px]"}>@</div>
      <div className={cell + " w-[25px] justify-center"}>
        <svg width="13" height="13" viewBox="0 0 13 13" aria-hidden="true">
          <path d="M.5 6l3-1.500 1.500 3L10 .5l2.500.5L6 12.500 3 12z" fill="#1c2fd0" stroke="#000" strokeWidth=".8" />
          <path d="M2 6.500l2.500 3.500 6-8.500" stroke="#30d8f0" strokeWidth="1.400" fill="none" />
        </svg>
      </div>
      <div className={cell + " w-6"} />
      <div className={cell + " w-[99px]"} />
      <div className={cell + " w-8"} />
      <div className={cell + " w-6 justify-center"}>
        <svg width="16" height="16" viewBox="0 0 16 16" fill="none" aria-hidden="true">
          <circle cx="8" cy="8" r="7.300" fill="#fff" stroke="#4a6a8c" />
          <path d="M4 7.500l3 3.500 5-6" stroke="#2a74c0" strokeWidth="2.400" />
        </svg>
      </div>
      <div className={cell + " w-[25px]"} />
      <div className={cell + " w-[19px] items-end justify-end"}>
        <svg width="9" height="9" viewBox="0 0 9 9" fill="#a8a8a8" shapeRendering="crispEdges" aria-hidden="true">
          <path d="M6 0h2v2H6zM3 3h2v2H3zM6 3h2v2H6zM0 6h2v2H0zM3 6h2v2H3zM6 6h2v2H6z" />
        </svg>
      </div>
    </footer>
  );
}

export default function App() {
  return (
    <div className="flex min-h-screen flex-col border-x border-[#0078d7] bg-linear-to-r from-[#9ebef3] to-[#c9dcf9] font-['Open_Sans','Noto_Sans',sans-serif] text-[12px] leading-4 text-black">
      <TitleBar />
      <MenuBar />
      <ToolBar />
      <main className="flex flex-1 gap-[3px] bg-[#d1e1fa] px-px pt-px pb-px">
        <div className="flex min-w-0 flex-1 flex-col gap-[3px]">
          <section className="border border-[#87ace8] pt-[3px] pb-[7px] pl-[5px]">
            <div className="relative flex">
              <DeliveryForm />
              <CustomerForm />
              <div className="absolute -bottom-1 left-[298px] w-[149px] bg-[#d1e1fa] text-right leading-4 font-bold whitespace-nowrap text-[#0a0a9a]">
                Prenesené/Vybavené
              </div>
            </div>
          </section>
          <section className="flex flex-1 flex-col border border-[#87ace8]">
            <TabBar />
            <ItemGrid />
          </section>
        </div>
        <Sidebar />
      </main>
      <StatusBar />
    </div>
  );
}
